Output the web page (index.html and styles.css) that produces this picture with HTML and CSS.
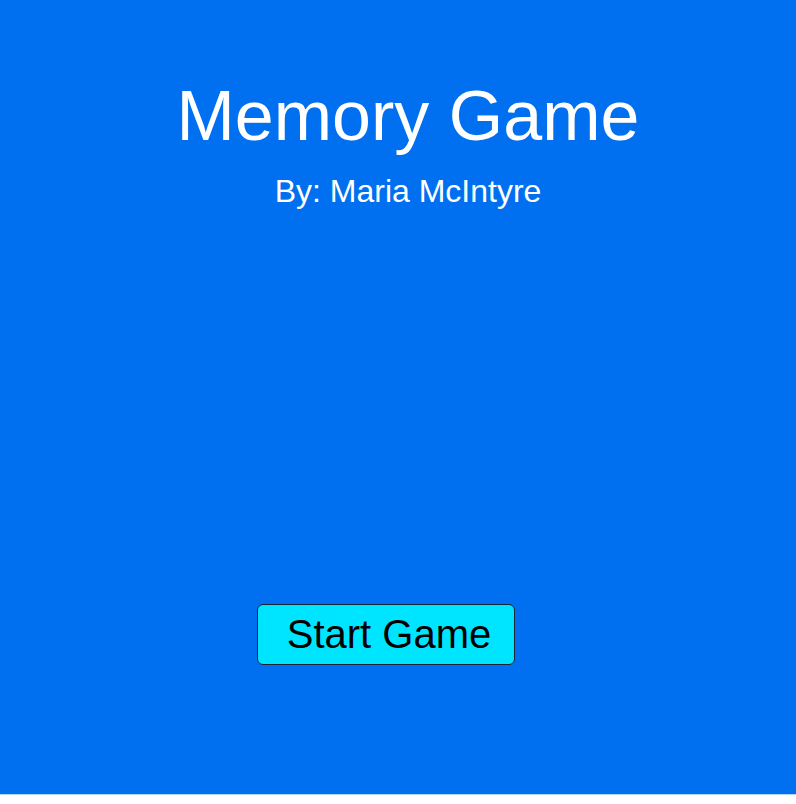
FILE: index.html
```html
<!DOCTYPE html>
<html>
<head>
<meta charset="utf-8">
<link rel="stylesheet" href="styles.css">
</head>
<body>
<main class="screen">
  <header class="heading">
    <h1 class="title">Memory Game</h1>
    <p class="byline">By: Maria McIntyre</p>
  </header>
  <div class="actions">
    <button class="start">Start Game</button>
  </div>
</main>
</body>
</html>
```
FILE: styles.css
```css
html, body {
  margin: 0;
  padding: 0;
  background: #ffffff;
}
.screen {
  height: 795px;
  background: #0070f0;
  border-bottom: 1px solid #b8d8fb;
  box-sizing: border-box;
  font-family: "Liberation Sans", Arial, sans-serif;
  display: flex;
  flex-direction: column;
}
.heading {
  padding: 0 0 0 20px;
  text-align: center;
  color: #ffffff;
}
.title {
  margin: 76px 0 0;
  font-size: 70px;
  font-weight: normal;
  line-height: 80px;
}
.byline {
  margin: 17px 0 0;
  font-size: 32px;
  line-height: 36px;
}
.actions {
  padding: 0 0 0 257px;
  margin-top: 395px;
}
.start {
  width: 258px;
  height: 61px;
  padding: 0 0 0 6px;
  background: #00e5ff;
  border: 1.5px solid #12243a;
  border-radius: 6px;
  font-family: "Liberation Sans", Arial, sans-serif;
  font-size: 40px;
  color: #000000;
}
```
